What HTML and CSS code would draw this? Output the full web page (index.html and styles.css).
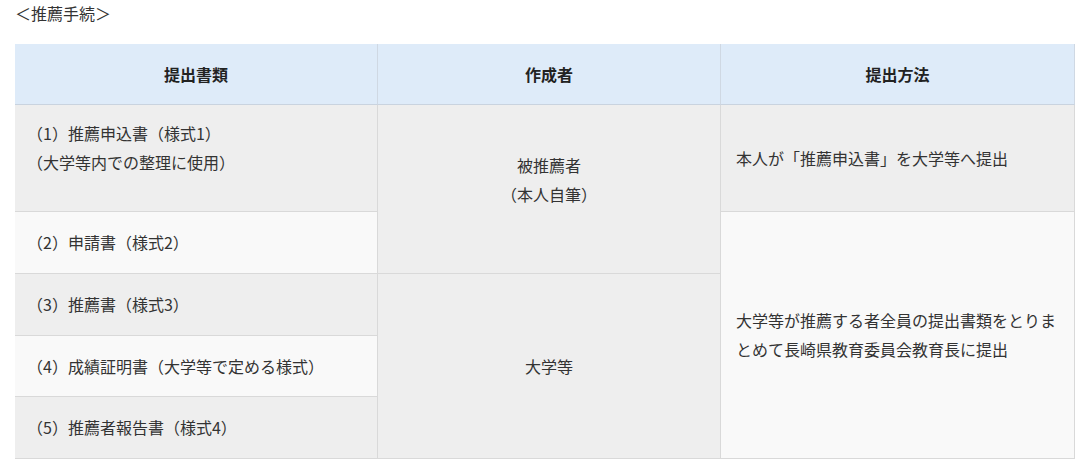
FILE: index.html
```html
<!DOCTYPE html>
<html lang="ja">
<head>
<meta charset="utf-8">
<title>推薦手続</title>
<link rel="stylesheet" href="styles.css">
</head>
<body>
<p class="title">＜推薦手続＞</p>
<div class="grid">
  <div class="cell head">提出書類</div>
  <div class="cell head">作成者</div>
  <div class="cell head">提出方法</div>

  <div class="cell doc odd r1">（1）推薦申込書（様式1）<br>（大学等内での整理に使用）</div>
  <div class="cell who odd span-a">被推薦者<br>（本人自筆）</div>
  <div class="cell how odd">本人が「推薦申込書」を大学等へ提出</div>

  <div class="cell doc even">（2）申請書（様式2）</div>
  <div class="cell how even span-c">大学等が推薦する者全員の提出書類をとりまとめて長崎県教育委員会教育長に提出</div>

  <div class="cell doc odd">（3）推薦書（様式3）</div>
  <div class="cell who odd span-b">大学等</div>
  <div class="cell doc even">（4）成績証明書（大学等で定める様式）</div>
  <div class="cell doc odd">（5）推薦者報告書（様式4）</div>
</div>
</body>
</html>
```
FILE: styles.css
```css
html, body {
  margin: 0;
  padding: 0;
  background: #ffffff;
}
body {
  padding: 0 15px;
  font-family: "Noto Sans CJK JP", "Noto Sans", sans-serif;
  font-size: 16px;
  color: #333333;
  text-spacing-trim: space-all;
}
.title {
  margin: 0 0 18px 0;
  line-height: 26px;
  font-size: 16px;
}
.grid {
  display: grid;
  width: 1060px;
  grid-template-columns: 363px 343px 354px;
  grid-template-rows: 61px 107px 62px 62px 61px 62px;
}
.cell {
  box-sizing: border-box;
  border-right: 1px solid #d9d9d9;
  border-bottom: 1px solid #d9d9d9;
  display: flex;
  flex-direction: column;
  justify-content: center;
  line-height: 28.8px;
  padding: 0 16px;
}
.head {
  background: #deebf9;
  border-right-color: #cfd8e3;
  border-bottom-color: #c9d3df;
  font-weight: bold;
  text-align: center;
  align-items: center;
  color: #222222;
}
.odd { background: #eeeeee; }
.even { background: #f9f9f9; }
.doc { text-align: left; padding-left: 12px; }
.r1 { padding-bottom: 20px; }
.who { text-align: center; align-items: center; }
.how { text-align: left; padding-left: 15px; padding-right: 15px; }
.span-a { grid-column: 2; grid-row: 2 / span 2; padding-bottom: 18px; }
.span-b { grid-column: 2; grid-row: 4 / span 3; }
.span-c { grid-column: 3; grid-row: 3 / span 4; }
```
